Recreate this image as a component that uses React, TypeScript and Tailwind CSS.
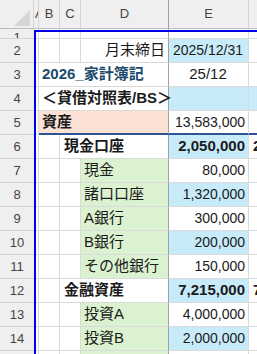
type Row = {
  n: number;
  kind: 'plain' | 'merge3' | 'merge2' | 'detail';
  label?: string;
  labelClass?: string;
  labelBg?: string;
  value?: string;
  valueClass?: string;
  valueBg?: string;
  fBg?: string;
  fText?: string;
  navy?: boolean;
};

const rows: Row[] = [
  { n: 2, kind: 'plain', label: '月末締日', value: '2025/12/31', valueClass: 'justify-center text-[13.5px]', valueBg: 'bg-[#c8ebf9]' },
  { n: 3, kind: 'merge3', label: '2026_家計簿記', labelClass: 'font-bold text-[#1b4a6b]', value: '25/12', valueClass: 'justify-center text-[15px]' },
  { n: 4, kind: 'merge3', label: '＜貸借対照表/BS＞', labelClass: 'font-bold', valueBg: 'bg-[#c8ebf9]', fBg: 'bg-[#c8ebf9]' },
  { n: 5, kind: 'merge3', label: '資産', labelClass: 'font-bold', labelBg: 'bg-[#fbe2d5]', value: '13,583,000', valueClass: 'justify-end text-[13px]', navy: true },
  { n: 6, kind: 'merge2', label: '現金口座', labelClass: 'font-bold', value: '2,050,000', valueClass: 'justify-end text-[15px] font-bold', valueBg: 'bg-[#c8ebf9]', fText: '2,050,000' },
  { n: 7, kind: 'detail', label: '現金', value: '80,000' },
  { n: 8, kind: 'detail', label: '諸口口座', value: '1,320,000', valueBg: 'bg-[#c8ebf9]' },
  { n: 9, kind: 'detail', label: 'A銀行', value: '300,000' },
  { n: 10, kind: 'detail', label: 'B銀行', value: '200,000', valueBg: 'bg-[#c8ebf9]' },
  { n: 11, kind: 'detail', label: 'その他銀行', value: '150,000' },
  { n: 12, kind: 'merge2', label: '金融資産', labelClass: 'font-bold', value: '7,215,000', valueClass: 'justify-end text-[15px] font-bold', valueBg: 'bg-[#c8ebf9]', fText: '7,215,000' },
  { n: 13, kind: 'detail', label: '投資A', value: '4,000,000' },
  { n: 14, kind: 'detail', label: '投資B', value: '2,000,000', valueBg: 'bg-[#c8ebf9]' },
  { n: 15, kind: 'detail', label: '' },
];

function RowHeader({ n }: { n: number }) {
  return (
    <div className="w-[34px] shrink-0 flex items-center justify-center bg-[#efefef] border-b border-[#d4d4d4] text-[13px] text-[#444]">
      {n}
    </div>
  );
}

function SheetRow({ r }: { r: Row }) {
  const bottom = r.navy ? 'border-b-2 border-b-[#2f5496]' : 'border-b border-b-[#dadada]';
  const cell = `shrink-0 ${bottom}`;
  return (
    <div className="flex h-[24px]">
      <RowHeader n={r.n} />
      <div className="w-[5px] shrink-0 border-r border-b border-[#dadada]" />
      {r.kind === 'merge3' ? (
        <div className={`w-[130px] ${cell} border-r border-r-[#a0a0a0] flex items-center pl-[3px] text-[15px] whitespace-nowrap relative z-10 ${r.labelBg ?? ''} ${r.labelClass ?? ''}`}>
          {r.label}
        </div>
      ) : (
        <>
          <div className={`w-[21px] ${cell} border-r border-r-[#dadada]`} />
          {r.kind === 'merge2' ? (
            <div className={`w-[109px] ${cell} border-r border-r-[#a0a0a0] flex items-center pl-[4px] text-[15px] whitespace-nowrap ${r.labelClass ?? ''}`}>
              {r.label}
            </div>
          ) : (
            <>
              <div className={`w-[21px] ${cell} border-r border-r-[#dadada]`} />
              <div
                className={`w-[88px] ${cell} border-r border-r-[#a0a0a0] flex items-center text-[15px] whitespace-nowrap ${
                  r.kind === 'detail' ? 'bg-[#daf2d0] pl-[3px]' : 'justify-end pr-[3px]'
                }`}
              >
                {r.label}
              </div>
            </>
          )}
        </>
      )}
      <div className={`w-[80px] ${cell} border-r border-r-[#dadada] flex items-center pr-[3px] pl-[2px] text-[14px] ${r.valueClass ?? 'justify-end'} ${r.valueBg ?? ''}`}>
        {r.value}
      </div>
      <div className={`w-[80px] ${cell} flex items-center pl-[4px] text-[15px] font-bold ${r.fBg ?? ''}`}>
        {r.fText}
      </div>
    </div>
  );
}

export default function App() {
  return (
    <div
      className="relative w-[257px] h-[354px] overflow-hidden bg-white text-[#1a1a1a]"
      style={{ fontFamily: '"Liberation Sans", "Noto Sans CJK JP", sans-serif' }}
    >
      {/* column headers */}
      <div className="flex h-[29px] bg-[#efefef] border-b border-[#bcbcbc] text-[13px] text-[#444]">
        <div className="w-[34px] shrink-0 relative border-r border-[#d4d4d4]">
          <div className="absolute right-[3px] bottom-[2px] w-0 h-0 border-l-[16px] border-l-transparent border-b-[16px] border-b-[#d6d6d6]" />
        </div>
        <div className="w-[5px] shrink-0 overflow-hidden border-r border-[#d4d4d4] flex items-center pl-[1px]">A</div>
        <div className="w-[21px] shrink-0 border-r border-[#d4d4d4] flex items-center justify-center">B</div>
        <div className="w-[21px] shrink-0 border-r border-[#d4d4d4] flex items-center justify-center">C</div>
        <div className="w-[88px] shrink-0 border-r border-[#a0a0a0] flex items-center justify-center">D</div>
        <div className="w-[80px] shrink-0 border-r border-[#d4d4d4] flex items-center justify-center">E</div>
        <div className="w-[80px] shrink-0" />
      </div>

      {/* row 1 (short) */}
      <div className="flex h-[10px]">
        <div className="w-[34px] shrink-0 overflow-hidden bg-[#efefef] border-b border-[#d4d4d4] flex justify-center items-end">
          <span className="text-[13px] text-[#444] leading-none mb-[-6px]">1</span>
        </div>
        <div className="w-[5px] shrink-0 border-r border-b border-[#dadada]" />
        <div className="w-[21px] shrink-0 border-r border-b border-[#dadada]" />
        <div className="w-[21px] shrink-0 border-r border-b border-[#dadada]" />
        <div className="w-[88px] shrink-0 border-r border-r-[#a0a0a0] border-b border-b-[#dadada]" />
        <div className="w-[80px] shrink-0 border-r border-b border-[#dadada]" />
        <div className="w-[80px] shrink-0 border-b border-[#dadada]" />
      </div>

      {rows.map((r) => (
        <SheetRow key={r.n} r={r} />
      ))}

      {/* selection frame */}
      <div className="absolute left-[34px] top-[30px] w-[300px] h-[400px] border-l-2 border-t-2 border-[#0000e6] pointer-events-none z-20" />
    </div>
  );
}
